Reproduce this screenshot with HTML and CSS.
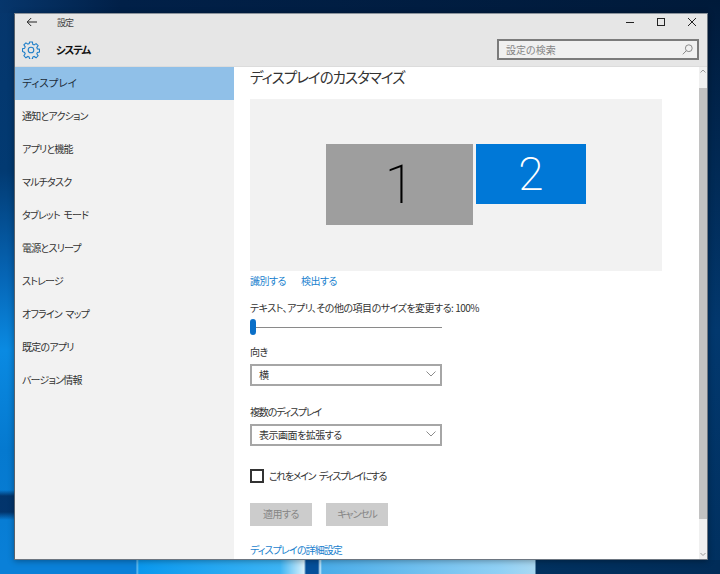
FILE: index.html
```html
<!DOCTYPE html>
<html lang="ja">
<head>
  <meta charset="UTF-8">
  <meta name="viewport" content="width=device-width, initial-scale=1.0">
  <title>設定</title>
  <link rel="stylesheet" href="styles.css">
</head>
<body>
  <div class="desktop">
    <div class="wall-strip"></div>
    <div class="window">
      <div class="header">
        <div class="title-row">
          <svg class="back-icon" width="12" height="10" viewBox="0 0 12 10"><path d="M11 5H1.500M5.200 1L1.200 5l4 4" fill="none" stroke="#222" stroke-width="1"/></svg>
          <span class="app-name">設定</span>
          <div class="win-controls">
            <svg width="10" height="10" viewBox="0 0 10 10"><path d="M1 5.500h8" stroke="#222" stroke-width="1"/></svg>
            <svg width="10" height="10" viewBox="0 0 10 10"><rect x="1.500" y="1.500" width="7" height="7" fill="none" stroke="#222" stroke-width="1"/></svg>
            <svg width="10" height="10" viewBox="0 0 10 10"><path d="M1 1l8 8M9 1l-8 8" stroke="#222" stroke-width="1"/></svg>
          </div>
        </div>
        <div class="section-row">
          <svg class="gear-icon" width="18" height="18" viewBox="0 0 18 18">
            <g fill="none" stroke="#1f7fc9" stroke-width="1.100">
              <circle cx="9" cy="9" r="2.800"/>
              <path d="M7.600 1h2.800l.4 2.300 1.300.6 2-1.300 2 2-1.300 2 .6 1.300 2.100.4v2.800l-2.100.4-.6 1.300 1.300 2-2 2-2-1.300-1.300.6-.4 2.100H7.600l-.4-2.100-1.300-.6-2 1.300-2-2 1.300-2-.6-1.300L.5 10.400V7.600l2.100-.4.6-1.300-1.300-2 2-2 2 1.300 1.300-.6z"/>
            </g>
          </svg>
          <span class="section-name">システム</span>
          <div class="search-box">
            <span>設定の検索</span>
            <svg width="11" height="11" viewBox="0 0 11 11"><circle cx="6.800" cy="4.200" r="3.400" fill="none" stroke="#8a8a8a"/><path d="M4.300 6.700L.8 10.300" stroke="#8a8a8a"/></svg>
          </div>
        </div>
      </div>
      <div class="body-row">
        <div class="sidebar">
          <div class="nav-item active">ディスプレイ</div>
          <div class="nav-item">通知とアクション</div>
          <div class="nav-item">アプリと機能</div>
          <div class="nav-item">マルチタスク</div>
          <div class="nav-item">タブレット モード</div>
          <div class="nav-item">電源とスリープ</div>
          <div class="nav-item">ストレージ</div>
          <div class="nav-item">オフライン マップ</div>
          <div class="nav-item">既定のアプリ</div>
          <div class="nav-item">バージョン情報</div>
        </div>
        <div class="content">
          <h1 class="page-title">ディスプレイのカスタマイズ</h1>
          <div class="preview">
            <div class="monitor monitor-one">1</div>
            <div class="monitor monitor-two">2</div>
          </div>
          <div class="link-row">
            <a>識別する</a>
            <a>検出する</a>
          </div>
          <div class="scale-label">テキスト、アプリ、その他の項目のサイズを変更する: 100%</div>
          <div class="slider"><div class="slider-thumb"></div></div>
          <div class="field-label">向き</div>
          <div class="select">
            <span>横</span>
            <svg width="10" height="6" viewBox="0 0 10 6"><path d="M.5.5L5 5 9.500.5" fill="none" stroke="#8c8c8c"/></svg>
          </div>
          <div class="field-label second tight">複数のディスプレイ</div>
          <div class="select">
            <span>表示画面を拡張する</span>
            <svg width="10" height="6" viewBox="0 0 10 6"><path d="M.5.5L5 5 9.500.5" fill="none" stroke="#8c8c8c"/></svg>
          </div>
          <div class="check-row">
            <div class="checkbox"></div>
            <span class="tight check-text">これをメイン ディスプレイにする</span>
          </div>
          <div class="button-row">
            <div class="btn">適用する</div>
            <div class="btn tight">キャンセル</div>
          </div>
          <a class="detail-link">ディスプレイの詳細設定</a>
        </div>
        <div class="scrollbar">
          <svg width="8" height="21" viewBox="0 0 8 21"><path d="M1.500 5.500L4 3l2.500 2.500" fill="none" stroke="#9a9a9a"/></svg>
          <div class="scroll-thumb"></div>
          <svg class="scroll-down" width="8" height="40" viewBox="0 0 8 40"><path d="M1.500 34L4 36.500 6.500 34" fill="none" stroke="#9a9a9a"/></svg>
        </div>
      </div>
    </div>
  </div>
</body>
</html>
```

FILE: styles.css
```css
html, body {
  margin: 0;
  padding: 0;
  height: 100%;
}

body {
  font-family: "Noto Sans CJK JP", "Liberation Sans", sans-serif;
  font-size: 10px;
  letter-spacing: -0.5px;
  font-feature-settings: "palt";
  color: #222;
  overflow: hidden;
}

.desktop {
  position: relative;
  width: 720px;
  height: 574px;
  box-sizing: border-box;
  padding: 13px 12px 14px 14px;
  background:
    linear-gradient(180deg, #001a3a 0, #02386e 330px, #01305f 574px) right top / 12px 100% no-repeat,
    linear-gradient(90deg, #06366c 0, #012048 120px, #001a3a 720px) left top / 100% 13px no-repeat,
    linear-gradient(180deg, transparent 0, transparent 490px, rgba(1, 40, 90, 0.85) 496px, rgba(1, 40, 90, 0.85) 512px, transparent 520px),
    linear-gradient(180deg, #06366c 0, #023a72 170px, #0667b8 280px, #0a8ae2 350px, #0579cf 450px, #0a80d8 574px);
}

.wall-strip {
  position: absolute;
  left: 0;
  right: 0;
  top: 560px;
  bottom: 0;
  background: linear-gradient(90deg, #0a80d8 0, #0a80d8 136px, #6fc0ee 137px, #0a98ee 139px, #3cb4f4 280px, #d8f0fb 304px, #054f9a 306px, #054f9a 318px, #d0ecfa 320px, #49ace8 322px, #90d0f5 500px, #a8d8f2 535px, #01315f 536px, #012c58 720px);
}

.window {
  position: relative;
  width: 694px;
  height: 547px;
  box-sizing: border-box;
  border: 1px solid #6d7681;
  border-top-color: #8a929b;
  border-left-color: #59626c;
  background: #fff;
  display: flex;
  flex-direction: column;
  box-shadow: 0 1px 6px rgba(0, 0, 0, 0.35);
}

.header {
  height: 52px;
  background: #e6e6e6;
  flex-shrink: 0;
  border-bottom: 1px solid #dcdcdc;
}

.title-row {
  height: 16px;
  display: flex;
  align-items: center;
}

.back-icon {
  margin-left: 11px;
}

.app-name {
  margin-left: 19px;
  font-size: 9px;
  letter-spacing: -1px;
  color: #444;
}

.win-controls {
  margin-left: auto;
  margin-right: 10px;
  display: flex;
  gap: 21px;
}

.section-row {
  height: 33px;
  margin-top: 3px;
  display: flex;
  align-items: center;
  padding-right: 8px;
}

.gear-icon {
  margin-left: 7px;
}

.section-name {
  margin-left: 16px;
  font-weight: 700;
  font-size: 10.5px;
  letter-spacing: -1.2px;
  color: #111;
}

.search-box {
  margin-left: auto;
  width: 187px;
  height: 17px;
  border: 2px solid #7b7b7b;
  background: #f0f0f0;
  color: #858585;
  letter-spacing: 0;
  display: flex;
  align-items: center;
  justify-content: space-between;
  padding: 0 4px 0 7px;
}

.body-row {
  flex: 1;
  display: flex;
  min-height: 0;
}

.sidebar {
  width: 219px;
  background: #f2f2f2;
  flex-shrink: 0;
}

.nav-item {
  height: 33px;
  line-height: 31px;
  padding-left: 7px;
  color: #333;
  letter-spacing: -0.8px;
  word-spacing: 2px;
}

.nav-item.active {
  background: #90c0e8;
  color: #1c2b38;
  font-size: 10.5px;
  letter-spacing: 0;
}

.content {
  flex: 1;
  min-width: 0;
  padding-left: 16px;
  overflow: hidden;
}

.page-title {
  margin: 0;
  font-size: 14.5px;
  font-weight: 400;
  letter-spacing: -1px;
  height: 32px;
  line-height: 19px;
  color: #333;
}

.preview {
  width: 412px;
  height: 172px;
  background: #f2f2f2;
  display: flex;
  align-items: flex-start;
  gap: 3px;
  padding: 45px 0 0 76px;
  box-sizing: border-box;
}

.monitor {
  display: flex;
  align-items: center;
  justify-content: center;
  font-family: "Roboto", "Liberation Sans", sans-serif;
  font-weight: 200;
  letter-spacing: 0;
}

.monitor-one {
  width: 147px;
  height: 81px;
  background: #9e9e9e;
  color: #000;
  font-size: 54px;
}

.monitor-two {
  width: 110px;
  height: 60px;
  background: #0078d7;
  color: #fff;
  font-size: 46px;
}

.link-row {
  display: flex;
  gap: 15px;
  height: 20px;
  line-height: 20px;
}

a {
  color: #1a7fce;
}

.scale-label {
  margin-top: 7px;
  height: 20px;
  line-height: 20px;
  color: #333;
}

.slider {
  position: relative;
  width: 192px;
  height: 16px;
  margin-top: 1px;
  display: flex;
  align-items: center;
}

.slider::before {
  content: "";
  display: block;
  width: 100%;
  height: 1px;
  background: #8a8a8a;
}

.slider-thumb {
  position: absolute;
  left: 0;
  top: 0;
  width: 6px;
  height: 16px;
  border-radius: 3px;
  background: #0a6fc8;
}

.field-label {
  margin-top: 7px;
  height: 20px;
  line-height: 20px;
  color: #333;
}

.field-label.second {
  margin-top: 16px;
}

.tight {
  letter-spacing: -1.2px;
}

.select {
  width: 192px;
  height: 22px;
  box-sizing: border-box;
  border: 2px solid #a6a6a6;
  background: #fff;
  margin-top: 2px;
  display: flex;
  align-items: center;
  justify-content: space-between;
  padding: 0 4px 2px 7px;
  color: #333;
}

.check-row {
  display: flex;
  align-items: center;
  gap: 5px;
  margin-top: 23px;
  height: 14px;
  color: #333;
}

.check-text {
  word-spacing: 3px;
  letter-spacing: -1.4px;
  margin-bottom: 2px;
}

.checkbox {
  width: 14px;
  height: 14px;
  box-sizing: border-box;
  border: 2px solid #333;
  background: #fff;
}

.button-row {
  display: flex;
  gap: 14px;
  margin-top: 20px;
}

.btn {
  width: 62px;
  height: 23px;
  line-height: 21px;
  text-align: center;
  background: #cccccc;
  color: #858585;
}

.detail-link {
  display: block;
  margin-top: 15px;
  height: 18px;
  line-height: 18px;
  letter-spacing: -0.9px;
}

.scrollbar {
  width: 8px;
  background: #f0f0f0;
  display: flex;
  flex-direction: column;
  flex-shrink: 0;
}

.scrollbar svg {
  display: block;
  flex-shrink: 0;
}

.scroll-thumb {
  flex: 1;
  background: #c2c2c2;
}
```
